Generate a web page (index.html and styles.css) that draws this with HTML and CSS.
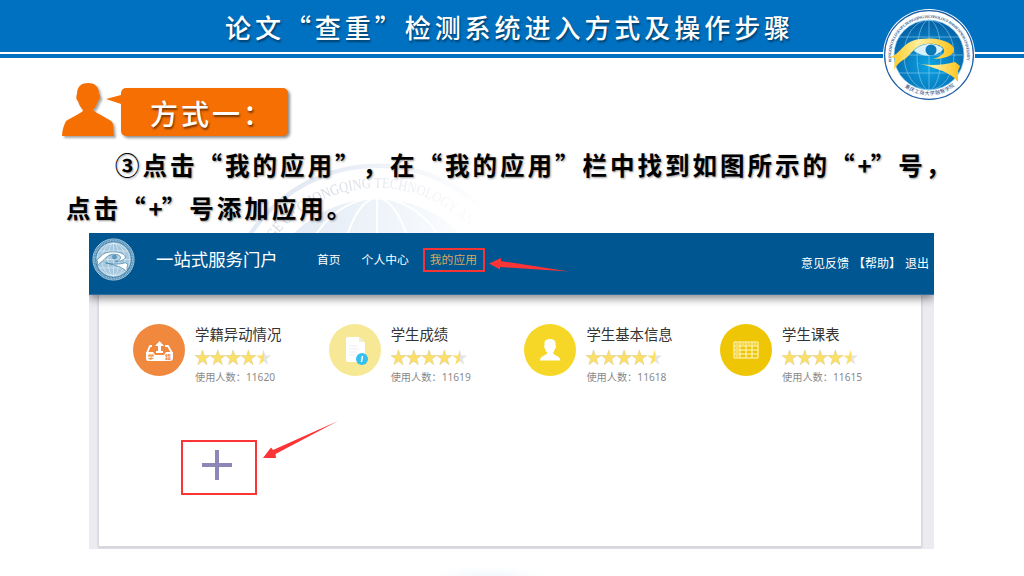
FILE: index.html
```html
<!DOCTYPE html>
<html lang="zh-CN">
<head>
    <meta charset="UTF-8">
    <meta name="viewport" content="width=device-width, initial-scale=1.0">
    <title>论文“查重”检测系统进入方式及操作步骤</title>
    <link rel="stylesheet" href="styles.css">
</head>
<body>

    <!-- Shared shapes -->
    <svg class="defs" width="0" height="0">
        <defs>
            <radialGradient id="globeFill" cx="50%" cy="65%" r="60%">
                <stop offset="0" stop-color="#0ba4e4"/>
                <stop offset="1" stop-color="#0563a8"/>
            </radialGradient>
            <linearGradient id="gold" x1="0" x2="1">
                <stop offset="0" stop-color="#ffc91d"/>
                <stop offset="0.45" stop-color="#ffee9c"/>
                <stop offset="1" stop-color="#fdc21a"/>
            </linearGradient>
            <linearGradient id="halfStar">
                <stop offset="50%" stop-color="#fbdf67"/>
                <stop offset="50%" stop-color="#e4e4e4"/>
            </linearGradient>
            <linearGradient id="fade" x1="0" x2="1">
                <stop offset="0.3" stop-color="#fff"/>
                <stop offset="0.85" stop-color="#000"/>
            </linearGradient>
            <mask id="fadeMask"><rect width="320" height="320" fill="url(#fade)"/></mask>
            <g id="grid" fill="none">
                <circle r="35"/>
                <ellipse rx="12" ry="35"/>
                <ellipse rx="25" ry="35"/>
                <path d="M0-35V35M-35 0H35M-30-18H30M-30 18H30"/>
            </g>
            <g id="ribbon">
                <path d="M-39 2C-30 0-27-10-17-14C-8-17 4-17 12-15C21-13 26-8 25-4C24 1 14 4 4 4C11 2 16-1 15-5C14-10 5-12-3-11C-13-10-18-1-24 4C-28 6-32 9-35 15L-34 3Z"/>
                <path d="M-17 7C-5 11 12 11 26 7L31 11L29 16V27C22 17 4 12-17 7Z"/>
            </g>
            <path id="star" d="M7.5 0L9.3 5.5H15L10.4 9L12.1 14.7L7.5 11.2L2.9 14.7L4.6 9L0 5.5H5.7Z"/>
            <g id="stars" stroke="#d9c98a" stroke-width="0.5">
                <use href="#star" x="0" fill="#fbdf67"/>
                <use href="#star" x="15.3" fill="#fbdf67"/>
                <use href="#star" x="30.6" fill="#fbdf67"/>
                <use href="#star" x="45.9" fill="#fbdf67"/>
                <use href="#star" x="61.2" fill="url(#halfStar)" stroke="none"/>
            </g>
            <path id="ringTop" d="M-37.5 7A38 38 0 1 1 37.5 7"/>
            <path id="ringBottom" d="M-29 28A40.5 40.5 0 0 0 29 28"/>
            <path id="ringPale" d="M-30.5-22.7A38 38 0 0 1 27-26.700"/>
        </defs>
    </svg>

    <header class="slide-header">
        <h1 class="slide-title">论文“查重”检测系统进入方式及操作步骤</h1>
    </header>
    <div class="header-strip"></div>

    <!-- School emblem over the header -->
    <svg class="emblem" viewBox="-46 -46 92 92">
        <circle r="46" fill="#fff"/>
        <circle r="44.4" fill="none" stroke="#1f5fa6" stroke-width="1.2"/>
        <circle r="35" fill="url(#globeFill)"/>
        <use href="#grid" stroke="#8fd0f2" stroke-width="0.6"/>
        <use href="#ribbon" fill="url(#gold)"/>
        <path d="M-15-4C-9-13 8-13 14-6C9 2-6 3-15-4Z" fill="#d9f1fc"/>
        <circle cx="2" cy="-5" r="5.5" fill="#0878b8"/>
        <text class="ring-text"><textPath href="#ringTop" textLength="130">RONGZHI COLLEGE OF CHONGQING TECHNOLOGY AND BUSINESS UNIVERSITY</textPath></text>
        <text class="ring-name"><textPath href="#ringBottom" startOffset="6" textLength="54">重庆工商大学融智学院</textPath></text>
    </svg>

    <!-- Pale emblem behind the text -->
    <svg class="watermark" viewBox="0 0 320 76">
        <g mask="url(#fadeMask)">
            <g transform="translate(160 160) scale(3.4)">
                <circle r="44.5" fill="none" stroke="#e4eaf4" stroke-width="1.3"/>
                <circle r="35" fill="#e5edf6"/>
                <use href="#grid" stroke="#fff" stroke-width="0.6"/>
                <text class="ring-text pale"><textPath href="#ringPale" textLength="68" lengthAdjust="spacingAndGlyphs">GE OF CHONGQING TECHNOLOGY AND</textPath></text>
            </g>
        </g>
    </svg>
    <div class="watermark-foot"></div>

    <main class="slide">
        <div class="step-label">
            <svg class="person" width="54" height="56" viewBox="0 0 54 56">
                <path d="M26 1C32 1 37 4 37 12C39 13 38 18 36 19C35 23 33 26 31 28C33 30 35 31 37 32C42 35 46 37 49 39C52 41 51 47 52 54H0C0 48 2 43 4 39C8 36 14 34 18 31C20 30 21 29 21 28C19 26 17 23 16 19C14 18 14 14 15 12C15 4 20 1 26 1Z" fill="#f56f02"/>
            </svg>
            <div class="bubble">方式一：</div>
        </div>

        <div class="instructions">
            <p class="line first">③点击“我的应用”，在“我的应用”栏中找到如图所示的“<span class="plus-char">+</span>”号，</p>
            <p class="line">点击“<span class="plus-char">+</span>”号添加应用。</p>
        </div>

        <section class="portal">
            <div class="portal-header">
                <svg class="portal-logo" viewBox="-46 -46 92 92">
                    <circle r="44" fill="#4486b2" stroke="#b2cfe1" stroke-width="2"/>
                    <circle r="37" fill="#a6c8de"/>
                    <use href="#grid" stroke="#e7f2f8" stroke-width="1.2"/>
                    <use href="#ribbon" fill="#fff" stroke="#34799f" stroke-width="1.4"/>
                    <circle cx="2" cy="-5" r="5" fill="#5b96bc"/>
                    <circle class="portal-ring" r="40.5"/>
                </svg>
                <div class="portal-name">一站式服务门户</div>
                <nav class="portal-nav">
                    <a>首页</a>
                    <a>个人中心</a>
                    <a class="active">我的应用</a>
                </nav>
                <div class="portal-links">
                    <a>意见反馈</a>
                    <a>【帮助】</a>
                    <a>退出</a>
                </div>
                <svg class="arrow arrow-nav" width="80" height="14" viewBox="0 0 80 14">
                    <path d="M0 5.5L12 0V3L80 13.5L11 9V11.5Z" fill="#fb3535"/>
                </svg>
            </div>

            <div class="portal-body">
                <div class="panel">
                    <div class="apps">
                        <div class="app">
                            <svg class="app-icon orange" viewBox="0 0 52 52">
                                <path d="M19 22H17L14 29V35Q14 36 15 36H37Q39 36 39 34V29L35 22H32" fill="none" stroke="#fff" stroke-width="1.8"/>
                                <path d="M13 28H20L22 31H31L33 28H40V34Q40 36 38 36H15Q13 36 13 34Z" fill="#fff"/>
                                <path d="M26.500 17L31 22H28V27H30V29H23V27H25V22H22Z" fill="#fff"/>
                                <text class="icon-text" x="15" y="34.500">学</text>
                                <text class="icon-text" x="32" y="34.500">籍</text>
                            </svg>
                            <div class="app-info">
                                <div class="app-name">学籍异动情况</div>
                                <svg class="rating" width="77" height="15"><use href="#stars"/></svg>
                                <div class="app-users">使用人数：<span>11620</span></div>
                            </div>
                        </div>
                        <div class="app">
                            <svg class="app-icon pale-yellow" viewBox="0 0 52 52">
                                <path d="M18 13H30L36 19V36Q36 38 34 38H19Q17 38 17 36V15Q17 13 18 13Z" fill="#fff"/>
                                <path d="M30 13V18H36Z" fill="#f1eed9"/>
                                <path d="M20 22H28M20 25H30M20 28H28M20 31H26" stroke="#e9e9e9" stroke-width="0.8"/>
                                <circle cx="33" cy="35" r="6" fill="#36c0ef"/>
                                <path d="M33.500 32L32.500 38" stroke="#fff" stroke-width="1.500"/>
                            </svg>
                            <div class="app-info">
                                <div class="app-name">学生成绩</div>
                                <svg class="rating" width="77" height="15"><use href="#stars"/></svg>
                                <div class="app-users">使用人数：<span>11619</span></div>
                            </div>
                        </div>
                        <div class="app">
                            <svg class="app-icon yellow" viewBox="0 0 52 52">
                                <path d="M26 15C30 15 32 17 31.500 21C32.500 22 32 24 31 24.500C30.500 27 29.500 28 29 29C29 31 36 31.500 36.500 36.500H16C16 31.500 23 31 23.500 29C22.500 28 21.500 27 21 24.500C20 24 20 22 20.500 21C20 17 22 15 26 15Z" fill="#fff"/>
                            </svg>
                            <div class="app-info">
                                <div class="app-name">学生基本信息</div>
                                <svg class="rating" width="77" height="15"><use href="#stars"/></svg>
                                <div class="app-users">使用人数：<span>11618</span></div>
                            </div>
                        </div>
                        <div class="app">
                            <svg class="app-icon gold" viewBox="0 0 52 52">
                                <path d="M14 18H38V34H14ZM20 18V34M26 18V34M32 18V34M14 22H38M14 26H38M14 30H38" fill="none" stroke="#fff8d0" stroke-width="1"/>
                                <path d="M15.500 20H18.500M21.500 20H24.500M27.500 20H30.500M33.500 20H36.500M15.500 24H18.500M15.500 28H18.500M15.500 32H18.500" stroke="#fff8d0" stroke-width="1"/>
                            </svg>
                            <div class="app-info">
                                <div class="app-name">学生课表</div>
                                <svg class="rating" width="77" height="15"><use href="#stars"/></svg>
                                <div class="app-users">使用人数：<span>11615</span></div>
                            </div>
                        </div>
                    </div>

                    <div class="add-row">
                        <div class="add-app">
                            <svg width="30" height="30" viewBox="0 0 30 30">
                                <path d="M15 0V30M0 15H30" stroke="#8d87b8" stroke-width="4"/>
                            </svg>
                        </div>
                        <svg class="arrow arrow-add" width="75" height="38" viewBox="0 0 75 38">
                            <path d="M0 37L8 26.500L10 29L75 0L12.500 33L13 37Z" fill="#fb3535"/>
                        </svg>
                    </div>
                </div>
            </div>
        </section>
    </main>

</body>
</html>
```
FILE: styles.css
```css
* {
    box-sizing: border-box;
}
body {
    margin: 0;
    width: 1024px;
    height: 576px;
    position: relative;
    overflow: hidden;
    background-color: #fff;
    font-family: "Noto Sans CJK SC", sans-serif;
    text-spacing-trim: space-all;
}
.defs {
    position: absolute;
}

/* Header */
.slide-header {
    height: 54px;
    padding-left: 225px;
    background-color: #0070c0;
    border-bottom: 2px solid #fff;
}
.slide-title {
    margin: 0;
    font-size: 26px;
    line-height: 54px;
    font-weight: 500;
    letter-spacing: 3.95px;
    color: #fff;
    white-space: nowrap;
    text-shadow: 1px 2px 2px rgba(0, 0, 0, 0.45);
}
.header-strip {
    height: 4px;
    background-color: #0070c0;
}
.emblem {
    position: absolute;
    left: 883px;
    top: 9px;
    width: 92px;
    height: 92px;
}
.ring-text {
    font-family: "Liberation Serif", serif;
    font-size: 4px;
    font-weight: bold;
    fill: #37618f;
}
.ring-name {
    font-size: 5px;
    fill: #1b3f77;
}
.ring-text.pale {
    font-size: 4.4px;
    font-weight: normal;
    fill: #d3d8e2;
}
.portal-ring {
    fill: none;
    stroke: #a9c9dd;
    stroke-width: 3;
    stroke-dasharray: 2 1.5;
}

/* Watermark sits behind the slide text */
.watermark {
    position: absolute;
    left: 217px;
    top: 157px;
    width: 320px;
    height: 76px;
    z-index: -1;
}
.watermark-foot {
    position: absolute;
    left: 430px;
    top: 566px;
    width: 120px;
    height: 10px;
    background: radial-gradient(ellipse at bottom, #f3f8fc, #fff 70%);
    z-index: -1;
}

/* Step label */
.slide {
    padding: 24px 0 0 62px;
}
.step-label {
    display: flex;
    height: 56px;
}
.person {
    filter: drop-shadow(2px 2px 1px rgba(0, 0, 0, 0.35));
}
.bubble {
    position: relative;
    width: 167px;
    height: 48px;
    margin: 6px 0 0 5px;
    padding-left: 29px;
    border-radius: 5px;
    background-color: #f56f02;
    box-shadow: 2px 2px 3px rgba(0, 0, 0, 0.45);
    color: #fff;
    font-size: 28px;
    line-height: 50px;
    font-weight: 500;
    letter-spacing: 3px;
    white-space: nowrap;
    text-shadow: 1px 2px 2px rgba(0, 0, 0, 0.5);
}
.bubble::before {
    content: "";
    position: absolute;
    left: -15px;
    top: 7px;
    border: solid transparent;
    border-width: 4px 15px 5px 0;
    border-right-color: #f56f02;
}

/* Instructions */
.instructions {
    height: 95px;
    padding-top: 5px;
}
.line {
    margin: 0;
    padding-left: 4px;
    font-size: 24.5px;
    line-height: 43px;
    font-weight: 600;
    letter-spacing: 3px;
    color: #000;
    white-space: nowrap;
    text-shadow: 1px 1px 2px rgba(0, 0, 0, 0.4);
}
.line.first {
    padding-left: 53px;
}
.plus-char {
    font-size: 24px;
    letter-spacing: -1px;
}

/* Portal screenshot */
.portal {
    width: 845px;
    height: 316px;
    margin-left: 27px;
}
.portal-header {
    position: relative;
    z-index: 1;
    display: flex;
    height: 62px;
    background-color: #005691;
    border-bottom: 1px solid #2f6f9f;
    box-shadow: 0 3px 9px rgba(0, 0, 0, 0.5);
    clip-path: inset(0 0 -14px 0);
    color: #fff;
    white-space: nowrap;
}
.portal-logo {
    width: 43px;
    height: 43px;
    margin: 5px 0 0 3px;
}
.portal-name {
    width: 121px;
    margin-left: 21px;
    font-size: 17.4px;
    line-height: 52px;
}
.portal-nav {
    display: flex;
    margin: 15px 0 0 40px;
    font-size: 11.8px;
    line-height: 21px;
}
.portal-nav a {
    margin-right: 21px;
}
.portal-nav .active {
    width: 62px;
    height: 24px;
    margin: 0 0 0 -7px;
    padding-left: 5px;
    border: 2px solid #f43535;
    color: #d9a760;
    line-height: 17px;
}
.portal-links {
    display: flex;
    gap: 4px;
    margin: 20px 5px 0 auto;
    font-size: 12px;
    line-height: 19px;
}
.arrow {
    position: absolute;
}
.arrow-nav {
    left: 400px;
    top: 25px;
}
.portal-body {
    height: 254px;
    padding: 0 12px 2px 9px;
    background-color: #ebebf1;
}
.panel {
    height: 252px;
    padding-top: 28px;
    background-color: #fff;
    border: 1px solid #d9d9de;
    border-top: none;
    box-shadow: 0 1px 2px rgba(0, 0, 0, 0.15);
}

/* Apps */
.apps {
    display: flex;
    padding-left: 34px;
}
.app {
    display: flex;
    width: 195.7px;
    height: 62px;
}
.app-icon {
    width: 52px;
    height: 52px;
    margin-top: 1px;
    border-radius: 50%;
}
.orange {
    background-color: #f0883d;
}
.pale-yellow {
    background-color: #f6e894;
}
.yellow {
    background-color: #f6d727;
}
.gold {
    background-color: #efc606;
}
.icon-text {
    font-size: 6px;
    font-weight: bold;
    fill: #f0883d;
}
.app-info {
    display: flex;
    flex-direction: column;
    margin-left: 10px;
}
.app-name {
    font-size: 14.4px;
    line-height: 22px;
    color: #333;
    white-space: nowrap;
}
.rating {
    margin-top: 5px;
}
.app-users {
    margin-top: 4px;
    font-family: "Noto Sans CJK TC", sans-serif;
    font-size: 10.2px;
    line-height: 16px;
    color: #8a8a8a;
    white-space: nowrap;
}
.app-users span {
    font-family: "Noto Sans", sans-serif;
}
.add-row {
    position: relative;
    padding: 55px 0 0 82px;
}
.add-app {
    width: 76px;
    height: 55px;
    padding: 8px 0 0 19px;
    border: 2px solid #fb3535;
}
.arrow-add {
    left: 164px;
    top: 36px;
}
```
